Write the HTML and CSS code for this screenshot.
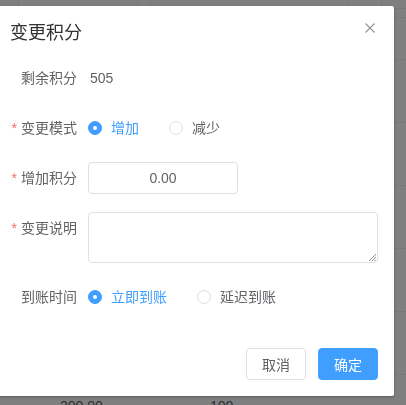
FILE: index.html
```html
<!DOCTYPE html>
<html lang="zh-CN">
<head>
<meta charset="utf-8">
<title>变更积分</title>
<link rel="stylesheet" href="styles.css">
</head>
<body>
<div class="table">
  <div class="thead">
    <div class="th c1"></div><div class="th c2"></div><div class="th c3"></div><div class="th c4"></div><div class="th c5"></div><div class="th c6"></div>
  </div>
  <div class="row r-thin"></div>
  <div class="row r-first"></div>
  <div class="row"></div>
  <div class="row"></div>
  <div class="row"></div>
  <div class="row"></div>
  <div class="row"></div>
  <div class="row r-data"><span class="cell-a">200.00</span><span class="cell-b">100</span></div>
</div>

<div class="overlay">
  <div class="dialog">
    <div class="dialog-header">
      <span class="dialog-title">变更积分</span>
      <button class="close" aria-label="关闭">
        <svg width="10" height="10" viewBox="0 0 10 10"><path d="M0.5 0.5 L9.5 9.5 M9.5 0.5 L0.5 9.5" stroke="#909399" stroke-width="1.1" fill="none"/></svg>
      </button>
    </div>
    <div class="dialog-body">
      <div class="form-item">
        <label class="form-label">剩余积分</label>
        <div class="form-content"><span class="value">505</span></div>
      </div>
      <div class="form-item">
        <label class="form-label required">变更模式</label>
        <div class="form-content">
          <span class="radio checked"><span class="radio-inner"></span><span class="radio-label">增加</span></span>
          <span class="radio"><span class="radio-inner"></span><span class="radio-label">减少</span></span>
        </div>
      </div>
      <div class="form-item">
        <label class="form-label required">增加积分</label>
        <div class="form-content"><div class="input">0.00</div></div>
      </div>
      <div class="form-item form-item-tall">
        <label class="form-label required">变更说明</label>
        <div class="form-content"><div class="textarea"><svg class="resize" width="7" height="7" viewBox="0 0 7 7"><path d="M7 0 L0 7 M7 3 L3 7 M7 5.5 L5.5 7" stroke="#777" stroke-width="0.8" fill="none"/></svg></div></div>
      </div>
      <div class="form-item">
        <label class="form-label">到账时间</label>
        <div class="form-content">
          <span class="radio checked"><span class="radio-inner"></span><span class="radio-label">立即到账</span></span>
          <span class="radio"><span class="radio-inner"></span><span class="radio-label">延迟到账</span></span>
        </div>
      </div>
    </div>
    <div class="dialog-footer">
      <button class="btn">取消</button>
      <button class="btn btn-primary">确定</button>
    </div>
  </div>
</div>
</body>
</html>
```

FILE: styles.css
```css
* { box-sizing: border-box; }
html, body { margin: 0; padding: 0; }
body {
  width: 406px;
  height: 405px;
  overflow: hidden;
  background: #fff;
  font-family: "Liberation Sans", "Noto Sans CJK SC", sans-serif;
  font-size: 14px;
  color: #606266;
}

/* background table */
.table { width: 406px; height: 405px; overflow: hidden; }
.thead {
  display: grid;
  grid-template-columns: 19px 119px 13px 198px 33px 24px;
  height: 9px;
  border-bottom: 1px solid #ebeef5;
}
.th { border-right: 1px solid #ebeef5; }
.th.c6 { border-right: none; }
.row { height: 63px; border-bottom: 1px solid #ebeef5; }
.r-thin { height: 9px; }
.r-first { height: 42px; }
.r-data {
  display: flex;
  align-items: center;
  height: 62px;
  border-bottom: none;
  color: #606266;
  font-size: 14px;
}
.cell-a { margin-left: 60px; width: 150px; }

/* overlay + dialog */
.overlay {
  position: fixed;
  inset: 0;
  background: rgba(0, 0, 0, 0.5);
}
.dialog {
  position: absolute;
  left: -6px;
  top: 6px;
  width: 400px;
  height: 390px;
  background: #fff;
  border-radius: 2px;
  box-shadow: 0 1px 3px rgba(0, 0, 0, 0.3);
}
.dialog-header {
  position: relative;
  padding: 15px 16px 0 16px;
  height: 56px;
}
.dialog-title {
  font-size: 18px;
  line-height: 24px;
  color: #303133;
}
.close {
  position: absolute;
  top: 17px;
  right: 19px;
  width: 10px;
  height: 10px;
  padding: 0;
  border: none;
  background: none;
  display: flex;
}
.dialog-body { padding: 0 16px; }
.form-item {
  display: flex;
  height: 32px;
  margin-bottom: 18px;
}
.form-item-tall { height: 51px; }
.form-label {
  width: 78px;
  padding-right: 11px;
  text-align: right;
  line-height: 32px;
  color: #606266;
  white-space: nowrap;
}
.form-label.required::before {
  content: "*";
  color: #f56c6c;
  margin-right: 4px;
}
.form-content {
  flex: 1;
  display: flex;
  align-items: center;
  line-height: 32px;
}
.form-item-tall .form-content { align-items: stretch; }
.value { color: #606266; padding-left: 2px; }

.radio {
  display: inline-flex;
  align-items: center;
  margin-right: 30px;
  color: #606266;
}
.radio-inner {
  width: 14px;
  height: 14px;
  border-radius: 50%;
  border: 1px solid #dcdfe6;
  background: #fff;
  position: relative;
}
.radio.checked .radio-inner {
  border-color: #409eff;
  background: #409eff;
}
.radio.checked .radio-inner::after {
  content: "";
  position: absolute;
  left: 50%;
  top: 50%;
  width: 4px;
  height: 4px;
  margin: -2px 0 0 -2px;
  border-radius: 50%;
  background: #fff;
}
.radio-label { padding-left: 9px; }
.radio.checked .radio-label { color: #409eff; }

.input {
  width: 150px;
  height: 32px;
  border: 1px solid #dcdfe6;
  border-radius: 4px;
  text-align: center;
  line-height: 30px;
  color: #606266;
}
.textarea {
  position: relative;
  width: 290px;
  height: 51px;
  border: 1px solid #dcdfe6;
  border-radius: 4px;
}
.resize {
  position: absolute;
  right: 1px;
  bottom: 1px;
}

.dialog-footer {
  display: flex;
  justify-content: flex-end;
  gap: 12px;
  padding: 17px 16px 0 16px;
}
.btn {
  height: 32px;
  width: 60px;
  padding: 0;
  font-family: inherit;
  font-size: 14px;
  border-radius: 4px;
  border: 1px solid #dcdfe6;
  background: #fff;
  color: #606266;
}
.btn-primary {
  background: #409eff;
  border-color: #409eff;
  color: #fff;
}
```
